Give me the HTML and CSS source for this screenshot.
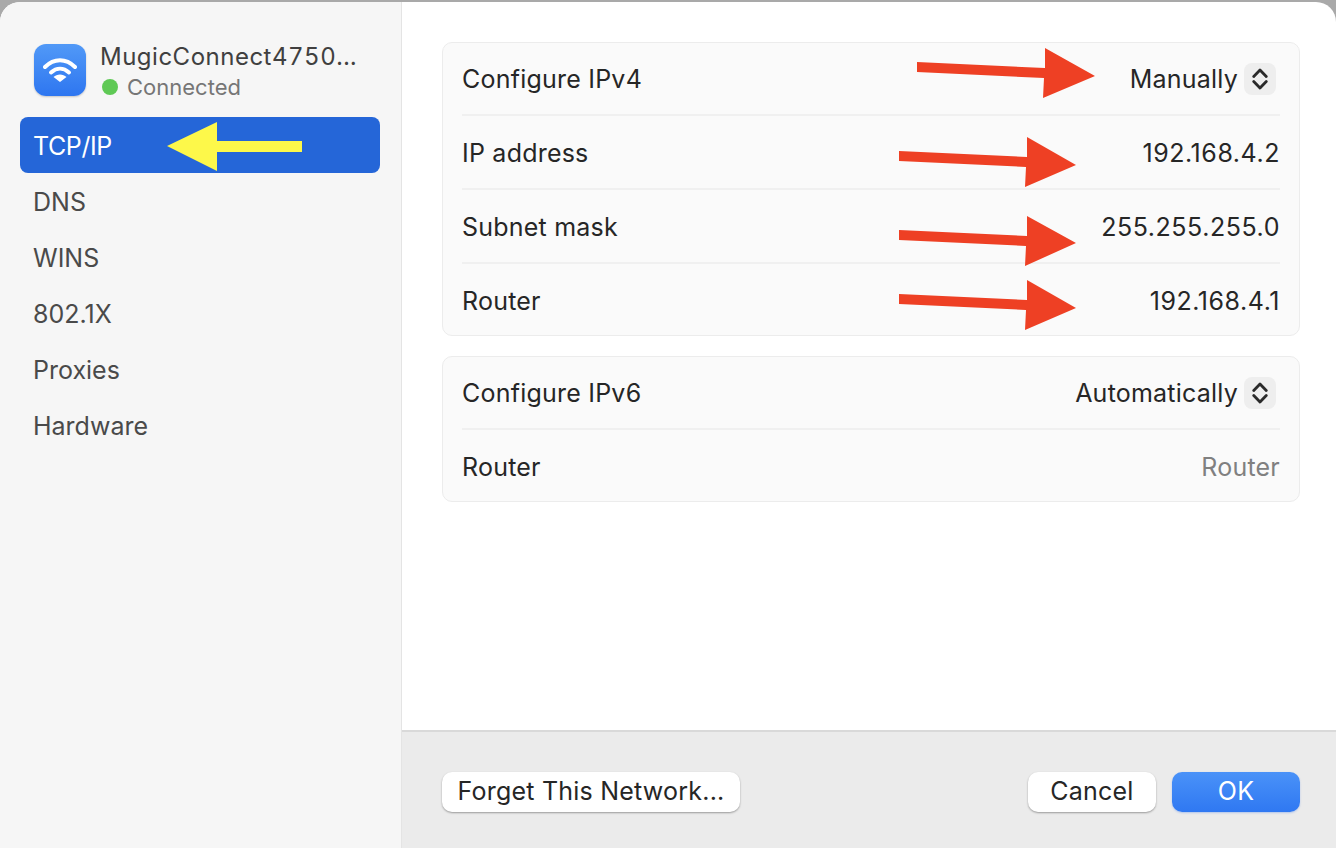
FILE: index.html
```html
<!DOCTYPE html>
<html lang="en">
<head>
    <meta charset="UTF-8">
    <title>Network details</title>
    <link rel="stylesheet" href="styles.css">
</head>
<body>

    <div class="window">
        <!-- Sidebar -->
        <aside class="sidebar">
            <div class="network">
                <div class="wifi-icon">
                    <svg width="34" height="26" viewBox="0 0 34 26">
                        <path d="M2 10 C11 1 23 1 32 10" class="wave"/>
                        <path d="M8 15.5 C13.5 10.5 20.5 10.5 26 15.5" class="wave"/>
                        <path d="M17 25 L10.5 20 C14 16.5 20 16.5 23.5 20 Z" fill="#fff"/>
                    </svg>
                </div>
                <div class="network-text">
                    <div class="network-name">MugicConnect4750...</div>
                    <div class="network-status"><span class="dot"></span>Connected</div>
                </div>
            </div>
            <ul class="nav">
                <li class="active">TCP/IP</li>
                <li>DNS</li>
                <li>WINS</li>
                <li>802.1X</li>
                <li>Proxies</li>
                <li>Hardware</li>
            </ul>
        </aside>

        <div class="main">
            <div class="content">
                <div class="group">
                    <div class="row">
                        <span>Configure IPv4</span>
                        <span class="select">Manually
                            <span class="stepper">
                                <svg width="16" height="24" viewBox="0 0 16 24"><path d="M1.75 9.5 L8 3 L14.25 9.5 M1.75 14.5 L8 21 L14.25 14.5"/></svg>
                            </span>
                        </span>
                    </div>
                    <div class="row"><span>IP address</span><span class="num">192.168.4.2</span></div>
                    <div class="row"><span>Subnet mask</span><span class="num">255.255.255.0</span></div>
                    <div class="row"><span>Router</span><span class="num">192.168.4.1</span></div>
                </div>

                <div class="group">
                    <div class="row">
                        <span>Configure IPv6</span>
                        <span class="select">Automatically
                            <span class="stepper">
                                <svg width="16" height="24" viewBox="0 0 16 24"><path d="M1.75 9.5 L8 3 L14.25 9.5 M1.75 14.5 L8 21 L14.25 14.5"/></svg>
                            </span>
                        </span>
                    </div>
                    <div class="row"><span>Router</span><span class="placeholder">Router</span></div>
                </div>
            </div>

            <!-- Footer buttons -->
            <div class="footer">
                <button class="btn btn-forget">Forget This Network...</button>
                <div class="footer-right">
                    <button class="btn btn-side">Cancel</button>
                    <button class="btn btn-side btn-primary">OK</button>
                </div>
            </div>
        </div>
    </div>

    <!-- Annotation arrows drawn over the screenshot -->
    <svg class="arrows" width="1336" height="848" viewBox="0 0 1336 848">
        <g fill="#ee4024">
            <polygon points="917,62 1045,68 1045,48 1095,76 1043,98 1044,78 917,72"/>
            <polygon points="899,151 1027,157 1027,137 1076,165 1025,187 1026,167 899,161"/>
            <polygon points="899,230 1027,236 1027,216 1076,243 1025,266 1026,246 899,240"/>
            <polygon points="899,294 1027,300 1027,280 1076,308 1025,330 1026,310 899,304"/>
        </g>
        <polygon fill="#fdf84a" points="167,146 217,122 217,141 302,141 302,152 217,152 217,171"/>
    </svg>

</body>
</html>
```

FILE: styles.css
```css
html, body {
    height: 100%;
}

body {
    margin: 0;
    background-color: #a9a9a9;
    font-family: 'Inter', 'Liberation Sans', sans-serif;
    font-size: 25px;
    letter-spacing: 0.22px;
    color: #262626;
    overflow: hidden;
}

.window {
    display: flex;
    height: 846px;
    margin-top: 2px;
    border-radius: 20px 20px 0 0;
    overflow: hidden;
    background-color: #fff;
}

/* Sidebar */
.sidebar {
    width: 402px;
    flex-shrink: 0;
    box-sizing: border-box;
    padding: 42px 21px 0 20px;
    background-color: #f6f6f6;
    border-right: 1px solid #e4e4e4;
}

.network {
    display: flex;
    align-items: flex-start;
    gap: 14px;
    padding-left: 14px;
    margin-bottom: 16px;
}

.wifi-icon {
    width: 52px;
    height: 52px;
    border-radius: 12px;
    background: linear-gradient(#5199f7, #2e76f0);
    display: flex;
    align-items: center;
    justify-content: center;
    box-shadow: 0 1px 2px rgba(0, 0, 0, 0.2);
}

.wave {
    fill: none;
    stroke: #fff;
    stroke-width: 4;
    stroke-linecap: round;
}

.network-name {
    font-size: 24px;
    line-height: 26px;
    letter-spacing: 0.5px;
    font-variant-numeric: tabular-nums;
    color: #404040;
    white-space: nowrap;
}

.network-status {
    display: flex;
    align-items: center;
    gap: 9px;
    margin-top: 3px;
    font-size: 22px;
    line-height: 28px;
    letter-spacing: 0;
    color: #767676;
}

.dot {
    width: 16px;
    height: 16px;
    margin-left: 2px;
    border-radius: 50%;
    background-color: #5fc955;
}

.nav {
    list-style-type: none;
    margin: 0;
    padding: 0;
    letter-spacing: 0;
}

.nav li {
    height: 56px;
    line-height: 58px;
    padding-left: 13px;
    border-radius: 8px;
    color: #4a4a4a;
}

.nav li.active {
    background-color: #2566d8;
    color: #fff;
    letter-spacing: -0.4px;
}

/* Main panel */
.main {
    flex: 1;
    display: flex;
    flex-direction: column;
}

.content {
    flex: 1;
    padding: 40px 36px 0 40px;
}

.group {
    background-color: #fafafa;
    border: 1px solid #ececec;
    border-radius: 10px;
    padding: 0 19px;
    margin-bottom: 20px;
}

.row {
    display: flex;
    justify-content: space-between;
    align-items: center;
    height: 70px;
    padding-top: 2px;
    border-bottom: 2px solid #f0f0f0;
}

.row:first-child {
    height: 71px;
    padding-top: 0;
}

.row:last-child {
    height: 69px;
    border-bottom: none;
}

.num {
    letter-spacing: 0.55px;
}

.select {
    display: flex;
    align-items: center;
    gap: 6px;
    margin-right: 4px;
}

.stepper {
    display: flex;
    align-items: center;
    justify-content: center;
    width: 32px;
    height: 32px;
    border-radius: 8px;
    background-color: #eeeeee;
}

.stepper path {
    fill: none;
    stroke: #2a2a2a;
    stroke-width: 2.8;
    stroke-linecap: round;
    stroke-linejoin: round;
}

.placeholder {
    color: #808080;
}

/* Footer */
.footer {
    display: flex;
    justify-content: space-between;
    align-items: center;
    height: 112px;
    padding: 4px 36px 0 40px;
    background-color: #ebebeb;
    border-top: 2px solid #d9d9d9;
}

.footer-right {
    display: flex;
    gap: 16px;
}

.btn {
    height: 40px;
    padding: 0 0 2px;
    border: none;
    border-radius: 10px;
    background-color: #fff;
    color: #262626;
    font-family: inherit;
    font-size: 25px;
    letter-spacing: 0.22px;
    box-shadow: 0 1px 2px rgba(0, 0, 0, 0.35);
}

.btn-forget {
    width: 298px;
}

.btn-side {
    width: 128px;
}

.btn-primary {
    background: linear-gradient(#4a92f8, #2f78f2);
    color: #fff;
    box-shadow: 0 1px 2px rgba(40, 110, 240, 0.3);
}

/* Annotations */
.arrows {
    position: absolute;
    top: 0;
    left: 0;
    pointer-events: none;
}
```
